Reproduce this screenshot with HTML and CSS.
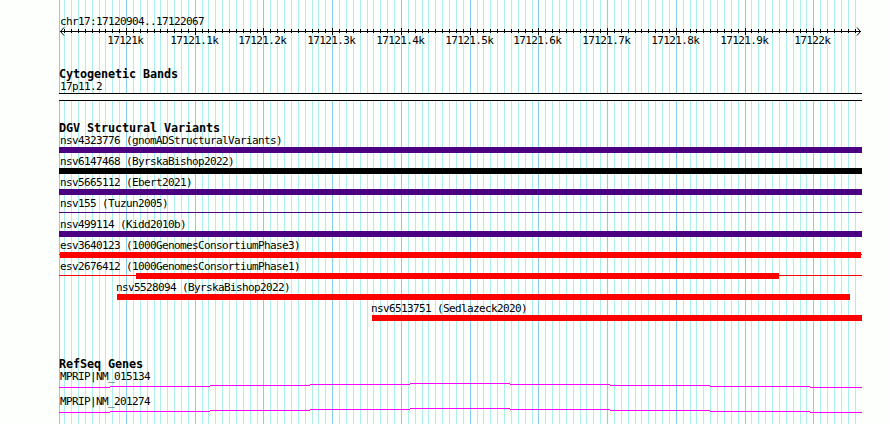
FILE: index.html
```
<!DOCTYPE html>
<html lang="en">
<head>
<meta charset="utf-8">
<title>chr17:17120904..17122067</title>
<link rel="stylesheet" href="styles.css">
</head>
<body>
<main class="browser">
  <svg class="grid" width="890" height="424" aria-hidden="true">
    <path id="grid-minor" class="grid-minor"/>
    <path id="grid-major" class="grid-major"/>
  </svg>

  <header class="overview">
    <div class="label">chr17:17120904..17122067</div>
    <svg class="ruler" width="831" height="24">
      <path id="ruler-ticks" class="ruler-ticks"/>
      <path class="ruler-line" d="M1 5.5H802M5 1.5L1.5 5.5L5 9.5M798 1.5L801.5 5.5L798 9.5"/>
      <g id="ruler-labels" class="ruler-labels"></g>
    </svg>
  </header>

  <section class="section bands">
    <h2 class="title">Cytogenetic Bands</h2>
    <div class="label">17p11.2</div>
    <div class="band"></div>
  </section>

  <section class="section variants">
    <h2 class="title">DGV Structural Variants</h2>
    <div class="feature"><div class="label">nsv4323776 (gnomADStructuralVariants)</div><div class="bar indigo"></div></div>
    <div class="feature"><div class="label">nsv6147468 (ByrskaBishop2022)</div><div class="bar black"></div></div>
    <div class="feature"><div class="label">nsv5665112 (Ebert2021)</div><div class="bar indigo"></div></div>
    <div class="feature"><div class="label">nsv155 (Tuzun2005)</div><div class="line indigo"></div></div>
    <div class="feature"><div class="label">nsv499114 (Kidd2010b)</div><div class="bar indigo"></div></div>
    <div class="feature"><div class="label">esv3640123 (1000GenomesConsortiumPhase3)</div><div class="span span-full"><div class="bar red"></div></div></div>
    <div class="feature"><div class="label">esv2676412 (1000GenomesConsortiumPhase1)</div><div class="span span-phase1"><div class="bar red"></div></div></div>
    <div class="feature byrska"><div class="label">nsv5528094 (ByrskaBishop2022)</div><div class="bar red"></div></div>
    <div class="feature sedlazeck"><div class="label">nsv6513751 (Sedlazeck2020)</div><div class="bar red"></div></div>
  </section>

  <section class="section genes">
    <h2 class="title">RefSeq Genes</h2>
    <div class="gene">
      <div class="label">MPRIP|NM_015134</div>
      <svg class="intron" width="803" height="6"><path d="M0 4.5H51M51 3.5H151M151 2.5H251M251 1.5H351M351 .5H451M451 1.5H551M551 2.5H651M651 3.5H751M751 4.5H803"/></svg>
    </div>
    <div class="gene">
      <div class="label">MPRIP|NM_201274</div>
      <svg class="intron" width="803" height="6"><path d="M0 4.5H51M51 3.5H151M151 2.5H251M251 1.5H351M351 .5H451M451 1.5H551M551 2.5H651M651 3.5H751M751 4.5H803"/></svg>
    </div>
  </section>
</main>
<script src="ruler.js"></script>
</body>
</html>
```
FILE: styles.css
```
body {
  margin: 0;
  background: #fdfffc;
  color: #000;
  font-family: "DejaVu Sans Mono", "Liberation Mono", monospace;
}

.browser {
  position: relative;
  box-sizing: border-box;
  width: 890px;
  height: 424px;
  padding: 15px 28px 0 59px;
  overflow: hidden;
}

.grid {
  position: absolute;
  inset: 0;
  z-index: -1;
  shape-rendering: crispEdges;
}

.grid-minor { stroke: #afeeee; }
.grid-major { stroke: #87ceeb; }

.label {
  height: 13px;
  padding-left: 1px;
  font-size: 11px;
  line-height: 13px;
  letter-spacing: -0.62px;
  white-space: pre;
}

.overview {
  height: 53px;
}

.overview .label {
  height: 11px;
}

.ruler {
  display: block;
}

.ruler-ticks {
  stroke: #000;
  shape-rendering: crispEdges;
}

.ruler-line {
  fill: none;
  stroke: #000;
}

.ruler-labels {
  font-size: 11px;
  letter-spacing: -0.62px;
}

.title {
  height: 12px;
  margin: 0;
  font-size: 11.8px;
  line-height: 13px;
  letter-spacing: -0.1px;
  white-space: pre;
}

.band {
  box-sizing: border-box;
  width: 803px;
  height: 8px;
  border: solid #000;
  border-width: 1px 0;
  background: #fdfffc;
}

.variants { margin-top: 21px; }

.feature {
  width: 803px;
  height: 21px;
}

.bar { height: 6px; }

.line {
  height: 1px;
  margin-top: 2px;
}

.indigo { background: #4b0082; }
.black { background: #000; }
.red { background: #f00; }

.span {
  height: 6px;
  background: linear-gradient(#f00, #f00) 0 2px / 100% 1px no-repeat;
}

.span-full .bar { margin: 0 1px; }
.span-phase1 .bar { margin: 0 83px 0 77px; }

.byrska {
  width: 733px;
  margin-left: 58px;
}

.byrska .label { padding-left: 0; margin-left: -1px; }

.sedlazeck {
  width: 490px;
  margin-left: 313px;
}

.sedlazeck .label { padding-left: 0; margin-left: -1px; }

.genes { margin-top: 35px; }

.gene { height: 25px; }

.intron {
  display: block;
  fill: none;
  stroke: #f0f;
  shape-rendering: crispEdges;
}
```
FILE: ruler.js
```
// One grid line every 10 bp, a labelled one every 100 bp.
const LEFT = 59;
const STEP = 8000 / 1164;
let minor = '';
let major = `M${LEFT + 0.5} 0V424`;
let ticks = '';
const labels = document.getElementById('ruler-labels');

for (let k = -9; k <= 106; k++) {
  const x = Math.floor(126.515 + STEP * k);
  const rx = x - LEFT;
  if (k % 10 === 0) {
    major += `M${x + 0.5} 0V424`;
    ticks += `M${rx + 0.5} 2V9`;
    const name = (17121 + k / 100) + 'k';
    const text = document.createElementNS('http://www.w3.org/2000/svg', 'text');
    text.setAttribute('x', rx - name.length * 3 - 0.7);
    text.setAttribute('y', 18);
    text.textContent = name;
    labels.appendChild(text);
  } else {
    minor += `M${x + 0.5} 0V424`;
    ticks += `M${rx + 0.5} 3V7`;
  }
}

document.getElementById('grid-minor').setAttribute('d', minor);
document.getElementById('grid-major').setAttribute('d', major);
document.getElementById('ruler-ticks').setAttribute('d', ticks);
```
